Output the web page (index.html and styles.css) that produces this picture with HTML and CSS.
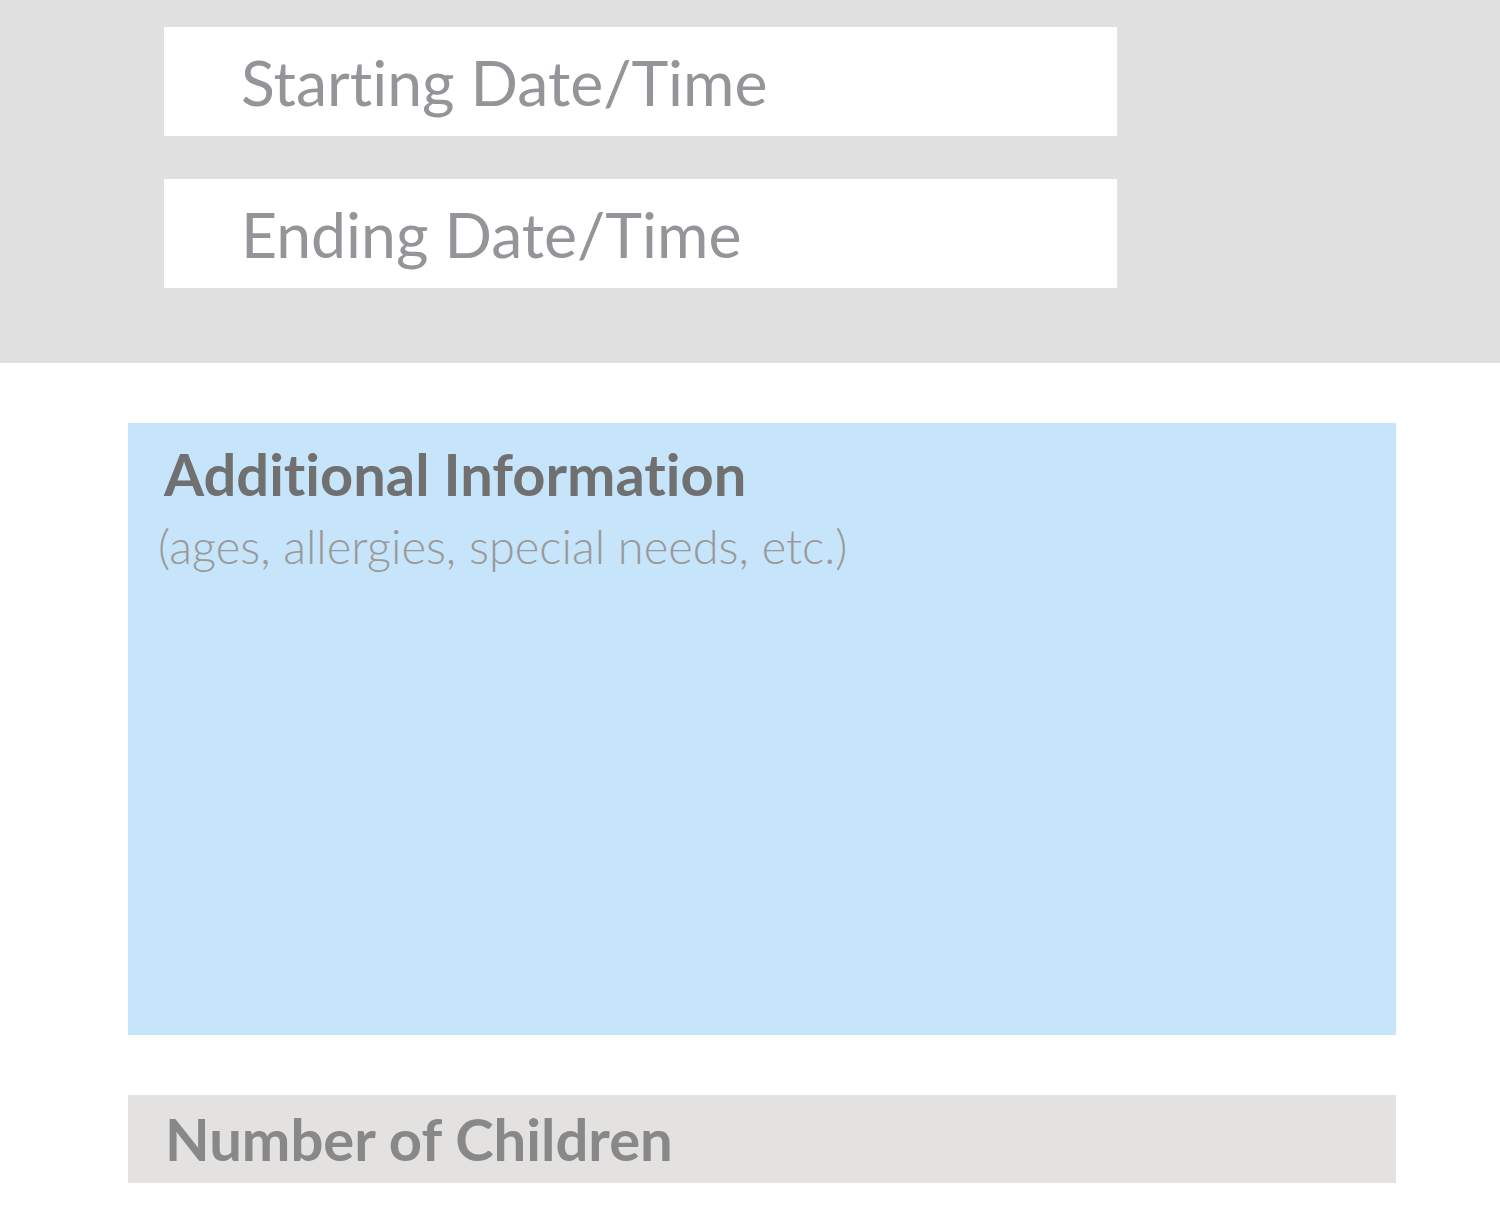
FILE: index.html
```html
<!DOCTYPE html>
<html lang="en">
<head>
<meta charset="utf-8">
<title>Booking form</title>
<link rel="stylesheet" href="styles.css">
</head>
<body>
  <section class="dates">
    <div class="field"><span class="field-label">Starting Date/Time</span></div>
    <div class="field"><span class="field-label">Ending Date/Time</span></div>
  </section>
  <section class="details">
    <div class="info-box">
      <h2 class="info-title">Additional Information</h2>
      <p class="info-hint">(ages, allergies, special needs, etc.)</p>
    </div>
    <div class="count-box"><span class="count-label">Number of Children</span></div>
  </section>
</body>
</html>
```
FILE: styles.css
```css
html, body {
  margin: 0;
  padding: 0;
  background: #ffffff;
  font-family: "Lato", "Open Sans", "DejaVu Sans", sans-serif;
  font-variant-ligatures: none;
}

.dates {
  background: #e1e1e1;
  height: 363px;
  box-sizing: border-box;
  padding: 27px 0 0 164px;
  display: flex;
  flex-direction: column;
  gap: 43px;
}

.field {
  width: 953px;
  height: 109px;
  background: #ffffff;
  display: flex;
  align-items: center;
  padding-left: 77px;
  box-sizing: border-box;
}

.field-label {
  color: #939598;
  font-size: 62.5px;
  font-weight: 400;
  line-height: 1;
  margin-top: 2px;
}

.details {
  padding: 60px 104px 0 128px;
  display: flex;
  flex-direction: column;
  gap: 60px;
}

.info-box {
  background: #c6e4fa;
  height: 612px;
  box-sizing: border-box;
  padding: 19px 0 0 36px;
}

.info-title {
  margin: 0;
  color: #707070;
  font-size: 57.8px;
  font-weight: 700;
  line-height: 64px;
}

.info-hint {
  margin: 10px 0 0 -6px;
  color: #999999;
  font-size: 47px;
  font-weight: 300;
  line-height: 60px;
}

.count-box {
  background: #e3e2e0;
  height: 88px;
  display: flex;
  align-items: center;
  padding-left: 37px;
}

.count-label {
  color: #888888;
  font-size: 58px;
  font-weight: 700;
  line-height: 1;
}
```
